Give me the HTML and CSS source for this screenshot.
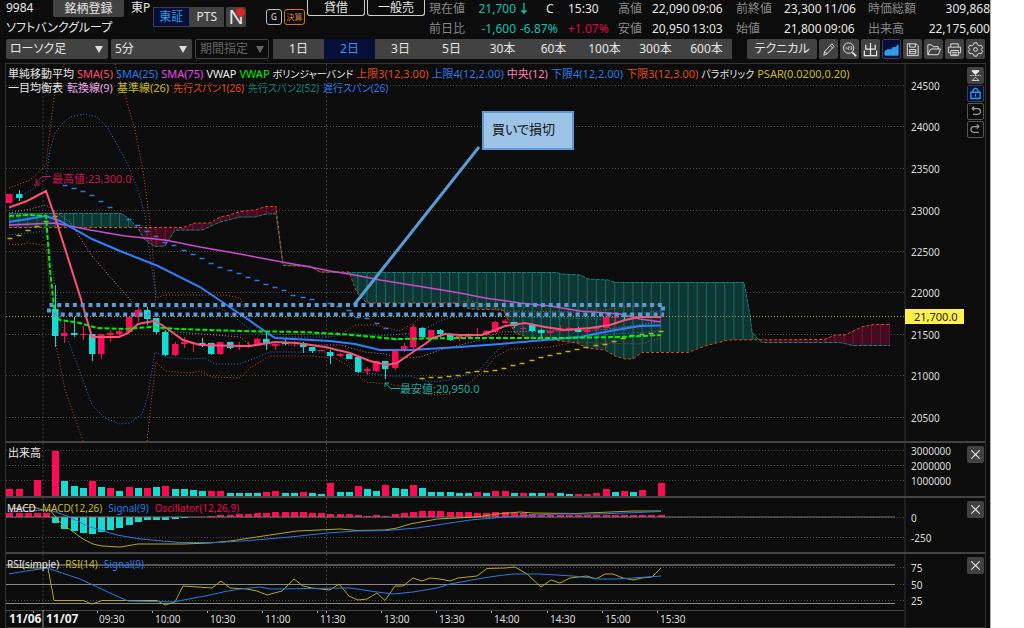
FILE: index.html
```html
<!DOCTYPE html>
<html lang="ja">

<head>
    <meta charset="UTF-8">
    <meta name="viewport" content="width=device-width, initial-scale=1.0">
    <title>9984 ソフトバンクグループ</title>
    <link rel="stylesheet" href="styles.css">
</head>

<body>
    <div class="app">
        <header class="header">
            <div class="symbol">
                <div class="symbol-top">
                    <span class="code">9984</span>
                    <button class="register">銘柄登録</button>
                    <span>東P</span>
                </div>
                <h1 class="symbol-name">ソフトバンクグループ</h1>
            </div>
            <div class="market-tabs">
                <button class="active">東証</button><button>PTS</button>
            </div>
            <button class="news">N<i class="news-dot"></i></button>
            <div class="badges">
                <span class="badge">G</span>
                <span class="badge badge-orange">決算</span>
            </div>
            <div class="margin-types">
                <button>貸借</button>
                <button>一般売</button>
            </div>
            <div class="quotes">
                <span class="label">現在値</span>
                <span class="down right">21,700</span>
                <span class="status"><b class="down">↓</b><span>C</span></span>
                <span>15:30</span>
                <span class="label">高値</span>
                <span>22,090</span>
                <span>09:06</span>
                <span class="label">前終値</span>
                <span>23,300</span>
                <span>11/06</span>
                <span class="label">時価総額</span>
                <span class="right">309,868</span>

                <span class="label">前日比</span>
                <span class="down right">-1,600</span>
                <span class="down">-6.87%</span>
                <span class="up">+1.07%</span>
                <span class="label">安値</span>
                <span>20,950</span>
                <span>13:03</span>
                <span class="label">始値</span>
                <span>21,800</span>
                <span>09:06</span>
                <span class="label">出来高</span>
                <span class="right">22,175,600</span>
            </div>
        </header>

        <div class="toolbar">
            <div class="select select-type">
                <select aria-label="チャート種類"><option>ローソク足</option></select>
            </div>
            <div class="select select-interval">
                <select aria-label="足種"><option>5分</option></select>
            </div>
            <div class="select select-period disabled">
                <select aria-label="期間" disabled><option>期間指定</option></select>
            </div>
            <div class="ranges">
                <button>1日</button>
                <button class="active">2日</button>
                <button>3日</button>
                <button>5日</button>
                <button>30本</button>
                <button>60本</button>
                <button>100本</button>
                <button>300本</button>
                <button>600本</button>
            </div>
            <div class="tools">
                <button class="technical">テクニカル</button>
                <button class="icon" aria-label="描画">
                    <svg viewBox="0 0 18 18"><path d="M4 15l1-4 7.500-8 2.500 2.500L7.500 13.500zM11 5l2.500 2.500M5 11l2.500 2.500" /></svg>
                </button>
                <button class="icon" aria-label="数値表示">
                    <svg viewBox="0 0 18 18"><circle cx="8" cy="7.500" r="5.500" /><path d="M12 12l4 4" stroke-width="2" /><path d="M5.500 6v3M7.300 6h1.400v1.500H7.300V9h1.400M10 6h1.300v3H10M10 7.500h1.300" stroke-width=".7" /></svg>
                </button>
                <button class="icon" aria-label="出来高">
                    <svg viewBox="0 0 18 18"><path d="M9 2v13.500M4 4v4.500h10V4M2.500 10v5.500h13V10" stroke-width="1.300" /></svg>
                </button>
                <button class="icon active" aria-label="エリア">
                    <svg viewBox="0 0 18 18"><path class="fill" d="M2 15V11l3-2 3 .5 3-3 2 .5 3-3v11z" /></svg>
                </button>
                <button class="icon" aria-label="保存">
                    <svg viewBox="0 0 18 18"><path d="M3.500 3h9.500l2 2v10.500H3.500zM6 3v3.500h6V3M6 9h6.500v4.500H6zM6 11.200h6.500" /></svg>
                </button>
                <button class="icon" aria-label="開く">
                    <svg viewBox="0 0 18 18"><path d="M3 14.500V4h4l1.500 2H14v2.500M3 14.500l3-6h10.500l-2.500 6z" /></svg>
                </button>
                <button class="icon" aria-label="印刷">
                    <svg viewBox="0 0 18 18"><path d="M5 6V3h8v3M5 12.500H2.500v-6h13v6H13M5 10h8v5.500H5zM6.500 12h5M6.500 14h5" /></svg>
                </button>
                <button class="icon" aria-label="設定">
                    <svg viewBox="0 0 18 18"><circle cx="9" cy="9" r="2" /><path d="M7.500 2h3l.6 2 1.900 1 2.100-.5 1.400 2.600L15 9l1.500 1.900-1.400 2.600-2.100-.5-1.900 1-.6 2h-3l-.6-2-1.900-1-2.100.5-1.400-2.600L3 9 1.500 7.100l1.400-2.600L5 5l1.900-1z" /></svg>
                </button>
            </div>
        </div>

        <main class="chart">
            <section class="pane">
                <svg class="plot" id="price" viewBox="6 64 958 377"></svg>
                <div class="side">
                    <button class="icon" aria-label="上下縮小">
                        <svg viewBox="0 0 18 18"><path class="fill" d="M5 3h8v1L9 8 5 4z" /><path d="M2.500 9h13" stroke-dasharray="2 1" /><path d="M5 15h8l-4-4z" /></svg>
                    </button>
                    <button class="icon active" aria-label="固定">
                        <svg viewBox="0 0 18 18"><path d="M3.500 7.500h11v7.500h-11zM6 7.500V5l2-2h2l2 2v2.500M9 9.500v3.500" stroke-width="1.600" /></svg>
                    </button>
                    <button class="icon outline" aria-label="元に戻す">
                        <svg viewBox="0 0 18 18"><path d="M5 5.500h6.500a3.500 3.500 0 0 1 0 7H6M7.500 3L5 5.500 7.500 8" stroke-width="1.500" /></svg>
                    </button>
                    <button class="icon outline" aria-label="やり直す">
                        <svg viewBox="0 0 18 18"><path d="M13 5.500H7a3.500 3.500 0 0 0 0 7h6M10.500 3L13 5.500 10.500 8" stroke-width="1.500" /></svg>
                    </button>
                </div>
                <div class="legend">
                    <p class="tight">
                        <span>単純移動平均</span>
                        <span class="pink">SMA(5)</span>
                        <span class="blue">SMA(25)</span>
                        <span class="magenta">SMA(75)</span>
                        <span>VWAP</span>
                        <span class="green">VWAP</span>
                        <span class="kana">ボリンジャーバンド</span>
                        <span class="orange">上限3(12,3.00)</span>
                        <span class="blue">上限4(12,2.00)</span>
                        <span class="rose">中央(12)</span>
                        <span class="blue">下限4(12,2.00)</span>
                        <span class="orange">下限3(12,3.00)</span>
                        <span class="kana">パラボリック</span>
                        <span class="yellow">PSAR(0.0200,0.20)</span>
                    </p>
                    <p>
                        <span>一目均衡表</span>
                        <span class="lilac">転換線(9)</span>
                        <span class="yellow">基準線(26)</span>
                        <span class="kana orange">先行スパン1(26)</span>
                        <span class="kana teal">先行スパン2(52)</span>
                        <span class="kana blue">遅行スパン(26)</span>
                    </p>
                </div>
                <div class="callout">買いで損切</div>
            </section>
            <section class="pane">
                <svg class="plot" id="volume" viewBox="6 443 958 53"></svg>
                <div class="side"><button class="icon" aria-label="閉じる"><svg viewBox="0 0 18 18"><path d="M4 4l10 10M14 4L4 14" stroke-width="1.500" /></svg></button></div>
                <div class="legend"><p><span>出来高</span></p></div>
            </section>
            <section class="pane">
                <svg class="plot" id="macd" viewBox="6 498 958 54"></svg>
                <div class="side"><button class="icon" aria-label="閉じる"><svg viewBox="0 0 18 18"><path d="M4 4l10 10M14 4L4 14" stroke-width="1.500" /></svg></button></div>
                <div class="legend small">
                    <p>
                        <span>MACD</span>
                        <span class="yellow">MACD(12,26)</span>
                        <span class="blue">Signal(9)</span>
                        <span class="red">Oscillator(12,26,9)</span>
                    </p>
                </div>
            </section>
            <section class="pane">
                <svg class="plot" id="rsi" viewBox="6 554 958 73"></svg>
                <div class="side"><button class="icon" aria-label="閉じる"><svg viewBox="0 0 18 18"><path d="M4 4l10 10M14 4L4 14" stroke-width="1.500" /></svg></button></div>
                <div class="legend small">
                    <p>
                        <span>RSI(simple)</span>
                        <span class="yellow">RSI(14)</span>
                        <span class="blue">Signal(9)</span>
                    </p>
                </div>
            </section>
        </main>
    </div>

    <script src="chart.js"></script>
</body>

</html>
```

FILE: styles.css
```css
* {
    box-sizing: border-box;
}

body {
    margin: 0;
    background-color: #fff;
    font-family: "Noto Sans", "Noto Sans CJK JP", sans-serif;
    font-size: 12px;
    line-height: 16px;
    color: #e6e6e6;
    font-feature-settings: "palt";
}

button,
select {
    font: inherit;
    font-feature-settings: inherit;
    color: inherit;
    border: none;
    padding: 0;
    margin: 0;
    background-color: #424242;
    border-radius: 2px;
    cursor: pointer;
}

.app {
    margin-right: 33px;
    background-color: #0c0c0c;
    border-right: 1px solid #aaa;
    overflow: hidden;
}

/* Header */

.header {
    display: flex;
    height: 39px;
    padding-left: 6px;
    white-space: nowrap;
}

.symbol {
    width: 147px;
}

.symbol-top {
    display: flex;
    height: 18px;
    gap: 7px;
}

.code {
    width: 40px;
}

.register {
    width: 71px;
    height: 17px;
    border-radius: 0 0 2px 2px;
}

.symbol-name {
    margin: 0;
    font-size: 12px;
    line-height: 20px;
    font-weight: normal;
}

.market-tabs {
    display: flex;
    width: 71px;
    height: 20px;
    margin-top: 7px;
}

.market-tabs button {
    flex: 1;
    border-radius: 0;
}

.market-tabs .active,
.ranges .active,
.icon.active {
    background-color: #050f37;
    color: #2f9bea;
}

.market-tabs .active,
.icon.active {
    border: 1px solid #3a3f50;
}

.news {
    position: relative;
    width: 20px;
    height: 20px;
    margin: 7px 0 0 2px;
    font-size: 20px;
    line-height: 20px;
}

.news-dot {
    position: absolute;
    top: 1px;
    right: 1px;
    width: 9px;
    height: 9px;
    border-radius: 50%;
    background-color: #dc2424;
}

.badges {
    display: flex;
    gap: 2px;
    margin: 9px 2px 0 20px;
}

.badge {
    width: 16px;
    height: 16px;
    border: 1px solid #bbb;
    border-radius: 3px;
    font-size: 8px;
    line-height: 14px;
    text-align: center;
}

.badge-orange {
    width: 21px;
    border-color: #c87820;
    color: #d07c20;
}

.margin-types {
    display: flex;
    gap: 2px;
}

.margin-types button {
    width: 58px;
    height: 16px;
    background-color: transparent;
    border: 1px solid #ccc;
    border-top: none;
    border-radius: 0 0 3px 3px;
}

.quotes {
    flex: 1;
    display: grid;
    grid-template-columns: 48px 39px 52px 50px 34px 40px 44px 48px 40px 44px 50px 1fr;
    grid-template-rows: 18px 22px;
    align-items: center;
    padding-left: 4px;
}

.label {
    color: #888;
}

.right {
    text-align: right;
}

.status {
    display: flex;
    gap: 16px;
    padding-left: 2px;
}

.down {
    color: #12c0b4;
}

.up {
    color: #e0044c;
}

.quotes .down + .down {
    padding-left: 4px;
}

/* Toolbar */

.toolbar {
    display: flex;
    height: 24px;
    padding: 0 5px 4px 6px;
    white-space: nowrap;
}

.select {
    position: relative;
    margin-right: 3px;
}

.select::after {
    content: "";
    position: absolute;
    top: 7px;
    right: 5px;
    border: 4px solid transparent;
    border-top: 7px solid #ddd;
    border-bottom: none;
    pointer-events: none;
}

.select select {
    width: 100%;
    height: 20px;
    padding-left: 4px;
    appearance: none;
}

.select-type {
    width: 102px;
}

.select-interval {
    width: 81px;
}

.select-period {
    width: 74px;
    margin-right: 4px;
}

.disabled select {
    background-color: #0c0c0c;
    border: 1px solid #424242;
    color: #666;
    opacity: 1;
}

.disabled::after {
    border-top-color: #666;
}

.ranges {
    display: flex;
    width: 459px;
    background-color: #424242;
}

.ranges button {
    flex: 1;
    border-radius: 0;
}

.tools {
    display: flex;
    gap: 2px;
    margin-left: auto;
}

.technical {
    width: 70px;
}

.icon {
    width: 19px;
    height: 20px;
}

.icon svg {
    display: block;
    width: 17px;
    height: 17px;
    margin: 0 auto;
    fill: none;
    stroke: currentColor;
}

.icon .fill {
    fill: currentColor;
}

/* Chart */

.chart {
    margin: 0 4px 0 5px;
    border: 1px solid #333;
}

.pane {
    position: relative;
    display: flex;
    border-bottom: 2px solid #444;
}

.pane:last-child {
    border-bottom: none;
}

.plot {
    flex: 1;
    min-width: 0;
    height: auto;
    font-size: 10px;
    fill: #dcdcdc;
}

.plot path,
.plot line {
    fill: none;
}

.plot .cloud-teal {
    fill: #103634;
}

.plot .cloud-red {
    fill: #420c1e;
}

.plot .date {
    font-size: 12px;
    font-weight: bold;
    fill: #eee;
}

.side {
    display: flex;
    flex-direction: column;
    gap: 1px;
    width: 21px;
    padding: 3px 0 0 3px;
}

.side .icon {
    width: 17px;
    height: 17px;
}

.side .icon svg {
    width: 15px;
    height: 15px;
}

.side .outline {
    background-color: #0c0c0c;
    border: 1px solid #555;
    color: #999;
}

.legend {
    position: absolute;
    top: 3px;
    left: 2px;
    font-size: 11px;
    line-height: 14px;
    white-space: nowrap;
}

.legend p {
    display: flex;
    gap: 4px;
    margin: 0;
}

.legend .tight {
    gap: 3px;
}

.legend.small {
    left: 1px;
    font-size: 10px;
}

.legend.small p {
    gap: 6px;
}

.kana {
    font-size: 10px;
}

.pink { color: #ff4a6c; }
.blue { color: #2a78e4; }
.magenta { color: #e84ae8; }
.green { color: #00f000; }
.orange { color: #e04a10; }
.rose { color: #ff80b0; }
.yellow { color: #c8b820; }
.lilac { color: #e8a8e8; }
.teal { color: #108070; }
.red { color: #f0044c; }

.callout {
    position: absolute;
    top: 47px;
    left: 476px;
    width: 92px;
    height: 39px;
    border: 2px solid #5b9bd5;
    background-color: #9dc3e6;
    color: #111;
    font-size: 13px;
    line-height: 33px;
    padding-left: 8px;
}
```

FILE: chart.js
```javascript
const NS = 'http://www.w3.org/2000/svg';
const UP = '#ff0a54';
const DOWN = '#14dcd2';

function add(id, tag, attrs, text) {
    const el = document.createElementNS(NS, tag);
    for (const key in attrs) el.setAttribute(key, attrs[key]);
    if (text) el.textContent = text;
    document.getElementById(id).appendChild(el);
    return el;
}

// x of the n-th 5 minute bar of the day
function barX(n) {
    return 55.3 + n * 9.17;
}

function line(id, points, color, width, dash) {
    const attrs = { d: 'M' + points, stroke: color, 'stroke-width': width || 1 };
    if (dash) attrs['stroke-dasharray'] = dash;
    add(id, 'path', attrs);
}

function label(id, x, y, text, attrs) {
    add(id, 'text', Object.assign({ x: x, y: y }, attrs), text);
}

function grid(id, top, bottom, rows) {
    [43, 326.5].forEach(x => line(id, `${x} ${top}V${bottom}`, '#383838', 1, '2 2'));
    rows.forEach(([y, text]) => {
        line(id, `6 ${y}H904`, '#484848', 1, '1 2');
        if (text) label(id, 911, y + 4, text);
    });
    line(id, `905 ${top}V627`, '#333', 1);
}

function cloud(points, name, from, to) {
    add('price', 'path', { d: 'M' + points + 'z', class: name });
    const clip = add('price', 'clipPath', { id: name + from });
    const shape = document.createElementNS(NS, 'path');
    shape.setAttribute('d', 'M' + points + 'z');
    clip.appendChild(shape);
    let d = '';
    for (let n = from; n <= to; n++) d += `M${barX(n)} 200V365`;
    add('price', 'path', { d: d, stroke: name === 'cloud-teal' ? '#107068' : '#801038', 'clip-path': `url(#${name + from})` });
}

function dashes(points, color) {
    points.forEach(([x, y]) => line('price', `${x - 2.5} ${y}h5`, color, 1.5));
}

/* Price */

grid('price', 64, 441, [
    [85.5, '24500'], [126.5, '24000'], [168.5, '23500'], [210.5, '23000'], [251.5, '22500'],
    [292.5, '22000'], [334.5, '21500'], [375.5, '21000'], [417.5, '20500']
]);

cloud('9 213L121 213L128 218L138 227.5L9 227.5', 'cloud-teal', -5, 9);
cloud('138 227.5L183 227.5L195 223L210 223L220 217L230 215L240 211.500L255 210L266 206L276 206L276 214L266 214L255 217L240 217L220 222L202 230L175 230L165 246L155 246.5L145 240', 'cloud-red', 9, 24);
cloud('349 272L556 272L562 274L580 275L588 279L608 280L615 282L744 282L750 315L752 332L757 338L761 340L728 340L705 346L688 352L642 352L633 359L625 359L615 356L605 350L587 348L577 343L553 340L530 338L515 333L510 323L503 310L470 309L453 303L367 303L357 293', 'cloud-teal', 32, 77);
cloud('761 339.5L824 339.5L835 335L845 335L862 327L874 324L890 324L890 345.5L853 345.5L840 342L762 342', 'cloud-red', 77, 91);

const spanA = '#d84a10';
const spanB = '#128078';
line('price', '9 213.5L121 213.5L128 218L138 228L145 240L155 246.5L165 246L175 230L202 230L220 222L240 217L255 217L266 214L276 214L283 265L310 266L320 272L349 272.5L556 272.5L562 274L580 275L588 279L608 280L615 282.5L744 282.5L750 315L752 332L757 338L762 342.5L840 342.5L853 345.5L890 345.5', spanB, 1, '4 1');
line('price', '9 227.5L183 227.5L195 223L210 223L220 217L230 215L240 211.5L255 210L266 206.5L276 206.5L283 265.5L310 266.5L320 272L349 272L357 293L367 303L453 303L470 309L503 310L510 323L515 333L530 338L553 340L577 343L587 348L605 350L615 356L625 359L633 359L642 352.5L688 352.5L705 346L728 340L824 339.5L835 335L845 335L862 327L874 324.5L890 324.5', spanA, 1, '3 2');

// bollinger bands
line('price', '9 188L30 180L46 165L50 130L54 98L57 80L64 64M115 64L125 95L135 130L143 170L149 215L153 255L156 298L165 295L190 295L225 295L240 298L250 320L262 334L340 335L355 325L375 325L400 331L415 322L430 310L450 303L470 301L490 306L503 311L580 312L640 306L661 304', '#cc4a18', 1, '1 2');
line('price', '9 244L20 245L27 243L46 245L50 290L57 350L65 390L75 418L83 441M147 441L152 395L156 362L165 371L190 373L200 371L212 377L240 378L250 368L270 356L310 356L335 358L350 367L365 382L390 384L410 388L430 395L450 394L468 384L485 370L495 357L510 349L550 347L575 342L600 343L640 344L661 338', '#cc4a18', 1, '1 2');
line('price', '9 202L30 191L46 179L50 150L55 133L62 124L70 117L85 114L97 117L107 127L117 144L128 165L138 190L145 215L150 255L155 290L156 308L190 308L220 308L232 315L253 332L275 337L330 337L353 333L370 336L393 335L420 332L440 321L453 317L480 316L600 319L640 313L661 311', '#2a70d8', 1, '1 2');
line('price', '9 235L46 231L51 260L60 320L70 345L80 372L92 405L105 418L120 424L130 423L142 414L148 395L155 352L165 357L190 359L205 358L215 364L240 364L250 360L270 352L325 352L340 355L360 372L390 376L410 376L430 382L450 380L480 370L490 358L500 348L510 343L550 339L600 335L661 331', '#2a70d8', 1, '1 2');
line('price', '9 213L30 209L46 205L60 215L70 222L92 256L132 302L165 331L215 335L240 337L250 345L340 345L365 352L385 354L400 358L420 357L440 350L480 340L500 332L540 331L600 330L640 325L661 321', '#c88090', 1, '1 2');

dashes([[65, 185], [74, 188], [83, 191], [92, 195], [101, 201], [110, 207], [129, 219], [138, 225], [147, 231], [156, 236], [165, 242], [174, 245], [184, 250], [193, 254], [202, 258], [211, 263], [220, 267], [230, 270], [239, 273], [248, 277], [257, 280], [266, 284], [275, 287], [284, 290], [293, 295], [303, 297], [312, 299], [330, 303], [339, 306], [349, 310], [358, 317], [367, 318], [377, 323], [386, 328], [395, 339]].map(([x, y]) => [x, y + 0.5]), '#2a78e4');
dashes([[10, 238], [19, 235], [28, 230], [37, 226], [46, 221], [55, 216], [422, 378], [431, 377], [440, 377], [449, 376], [458, 375], [468, 372], [477, 371], [486, 371], [495, 370], [504, 368], [513, 365], [522, 363], [532, 360], [541, 357], [550, 355], [559, 353], [568, 351], [577, 349], [586, 347], [596, 345], [605, 344], [614, 341], [623, 338], [632, 335], [642, 334], [651, 333], [661, 331]].map(([x, y]) => [x, y + 0.5]), '#c0a820');

// bar, rising, body top, body bottom, wick top, wick bottom
const candles = [
    [-5, 1, 194, 203, 194, 203], [-4, 0, 194, 198, 190, 201],
    [0, 0, 309, 336, 285, 347], [1, 1, 333, 336, 322, 343], [2, 0, 333, 335, 317, 337],
    [3, 1, 334, 335, 326, 340], [4, 0, 334, 354, 334, 361], [5, 1, 334, 354, 334, 359],
    [6, 1, 333, 335, 330, 342], [7, 1, 331, 334, 330, 337], [8, 1, 317, 332, 317, 332],
    [9, 1, 310, 317, 307, 322], [10, 0, 310, 319, 307, 325], [11, 0, 318, 332, 318, 334],
    [12, 0, 332, 355, 330, 356], [13, 1, 344, 355, 342, 356], [14, 1, 342, 344, 337, 348],
    [15, 1, 343, 343.5, 342, 352], [16, 0, 343, 345, 338, 347], [17, 0, 343, 354, 343, 355],
    [18, 1, 342, 354, 342, 355], [19, 0, 342, 348, 342, 349], [20, 1, 346, 347, 342, 350],
    [21, 1, 345, 347, 342, 348], [22, 1, 339, 345, 338, 346], [23, 0, 339, 344, 332, 350],
    [24, 1, 344, 346, 344, 350], [25, 0, 343, 344, 339, 345], [26, 1, 342, 343, 341, 347],
    [27, 0, 343, 347, 342, 353], [28, 0, 347, 351, 347, 353], [29, 1, 350, 351, 350, 351],
    [30, 0, 352, 356, 350, 364], [31, 1, 354, 356, 353, 357], [32, 0, 354, 359, 354, 359],
    [33, 0, 357, 372, 357, 373], [34, 1, 369, 371, 367, 375], [35, 1, 361, 371, 361, 372],
    [36, 0, 361, 369, 361, 379], [37, 1, 351, 368, 349, 370], [38, 1, 346, 350, 343, 352],
    [39, 1, 327, 347, 324, 350], [40, 0, 328, 337, 327, 339], [41, 1, 330, 339, 330, 340],
    [42, 0, 330, 334, 329, 337], [43, 0, 334, 340, 333, 341], [44, 1, 336, 339, 335, 341],
    [45, 1, 334, 337, 333, 338], [46, 1, 334, 336, 328, 338], [47, 1, 331, 335, 330, 336],
    [48, 1, 322, 332, 321, 333], [49, 1, 321, 323, 319, 324], [50, 0, 322, 326, 322, 328],
    [51, 1, 328, 329, 327, 330], [52, 0, 325, 331, 323, 332], [53, 0, 330, 333, 329, 338],
    [54, 1, 331, 333, 330, 334], [55, 1, 329, 331, 325, 332], [56, 1, 328, 329, 327, 330],
    [57, 0, 328, 332, 327, 332], [58, 1, 330, 332, 329, 333], [59, 1, 328, 329, 327, 330],
    [60, 1, 317, 328, 317, 328], [61, 1, 317, 318, 317, 325], [62, 0, 316, 317, 315, 319],
    [63, 1, 316, 317, 315, 318], [64, 1, 316, 317, 315, 318], [66, 1, 316, 317, 315, 318]
];
candles.forEach(([n, up, top, bottom, high, low]) => {
    const x = Math.round(barX(n));
    const fill = up ? UP : DOWN;
    add('price', 'rect', { x: x - 3, y: top, width: 6.5, height: bottom - top, fill: fill });
    add('price', 'rect', { x: x, y: high, width: 1, height: low - high, fill: fill });
});

line('price', '9 225L55 223L90 230L125 236L165 240L200 247L240 254L282 262L310 267L330 271L355 275L380 280L430 288L460 293L485 298L520 303L550 306L580 311L620 314L640 319L661 322', '#cc4cd0', 1.4);
line('price', '9 222L46 216L60 221L92 239L120 251L158 266L200 287L240 314L275 338L330 341L355 344L380 350L410 350L460 347L500 344L545 340L580 337L610 331L640 326L661 325.500', '#2f80ff', 2);
line('price', '9 207.500L27 201L46 191L55 217L80 296L92 337L119 337L128 333L138 324L148 322L155 321L165 327L183 340L200 345L240 346L250 346L275 342L297 343L325 347L350 353L370 361L387 365L397 363L410 354L425 344L433 338L445 334L460 335L482 335L495 330L505 326L525 323L545 327L565 330L590 328L610 325L625 320L640 317L661 317', '#ff5078', 2);
line('price', '9 216L30 215L46 216L50 270L55 315L60 320L80 323L97 328L125 329L150 327L180 329L240 331L300 332L340 334L375 337L395 339L460 338L560 338L620 337L661 335', '#00f000', 2, '5 2');
line('price', '6 316.500H904', '#a8a030', 1, '1 2');

// trade marks
line('price', '49.500 305H664', '#5b9bd5', 4, '4 3.800');
line('price', '53 314.500H664', '#5b9bd5', 4, '4 3.800');
line('price', '47 310.500h4M661 308.500h4', '#5b9bd5', 4);
line('price', '479 147L354 305', '#5b9bd5', 3);

line('price', '51 176.500H42L36 183M36 179v4h4M34 185h6', '#d0104f', 1);
label('price', 52, 183, '最高値:23,300.0', { fill: '#d0104f', 'font-size': 11 });
line('price', '400 388.500H391L385 383M385 387v-4h4', '#18aaa0', 1);
label('price', 400, 393, '最安値:20,950.0', { fill: '#18aaa0', 'font-size': 11 });

add('price', 'rect', { x: 905, y: 309, width: 60, height: 15, fill: '#fff04c' });
label('price', 914, 321, '21,700.0', { fill: '#222', 'font-size': 11 });

/* Volume */

grid('volume', 443, 496, [[450.5, '3000000'], [465.5, '2000000'], [480.5, '1000000']]);

const volumes = [
    7, 7, 0, 16, 0, 45, 15, 10, 8, 15, 9, 8, 5, 9, 8, 8, 9, 10, 7, 7, 6, 5, 5, 5, 3, 3, 3, 3, 4, 5, 3, 3, 4, 3, 2,
    13, 4, 4, 10, 7, 5, 11, 8, 7, 11, 8, 4, 4, 4, 3, 3, 4, 3, 5, 5, 3, 3, 3, 3, 3, 3, 2, 2, 2, 3, 7, 4, 5, 4, 6, 0, 13
];
const rising = [-5, -4, -2, 0, 4, 6, 8, 10, 12, 17, 18, 23, 24, 27, 30, 33, 36, 39, 46, 48, 49, 51, 54, 57, 58, 59, 60, 62, 64, 66];
volumes.forEach((h, i) => {
    add('volume', 'rect', { x: Math.round(barX(i - 5)) - 3, y: 496 - h, width: 7, height: h, fill: rising.includes(i - 5) ? UP : DOWN });
});

/* MACD */

grid('macd', 498, 552, [[517.5, '0'], [537.5, '-250']]);

const oscillator = [
    4, 4, 4, 4, 4, -6, -12, -14, -16, -17, -15, -13, -11, -8, -5, -3, -3, -3, -2, -1, 0, 0, 1, 2, 2, 3, 3, 4, 4, 5, 5, 5, 5, 4, 4,
    3, 3, 3, 2, 1, 2, 1, 3, 4, 5, 6, 6, 6, 5, 5, 5, 4, 4, 5, 5, 4, 4, 3, 2, 2, 2, 2, 2, 2, 2, 2, 2, 2, 2, 2, 2, 2
];
oscillator.forEach((h, i) => {
    add('macd', 'rect', { x: Math.round(barX(i - 5)) - 3, y: h > 0 ? 517 - h : 517, width: 7, height: Math.abs(h), fill: h > 0 ? UP : DOWN });
});
line('macd', '6 517H895', '#777', 1);
line('macd', '9 509L33 507L43 510L50 510L60 522L72 531L83 539L93 544L102 546L120 547L138 544L183 544L210 543L230 541L250 538L270 535L297 531L340 529L357 530.500L385 530L397 528L410 524L437 519L477 517L497 514L520 512L533 513L577 513.500L610 512L633 511L661 511', '#b8a420');
line('macd', '9 512L50 510L67 516L90 527L117 535L140 539L180 542.500L217 542.500L250 540.500L290 537L327 533L357 531L387 530.500L417 528L437 525L470 520L500 517.500L533 515L560 514L600 514L661 511.500', '#2a78e4');

/* RSI */

grid('rsi', 554, 610, [[567.5, '75'], [584.5, '50'], [600.5, '25']]);
line('rsi', '6 565H895', '#555', 2);
line('rsi', '6 584.500H895M6 603.500H895', '#888', 1);
line('rsi', '9 567L33 568L48 568L54 600.500L83 600.500L92 604L102 600.500L157 600.500L165 605L175 602L183 586L212 588L221 581L230 588L247 589L257 591L267 595L282 591L294 579L303 586L312 588L330 590L339 584L349 596L358 600L367 599L377 593L385 600.500L395 586L403 586L413 578L422 581L430 578L440 579L450 581L458 578L477 576L487 568.500L505 568L515 567L527 574L541 587L551 580L560 583L570 578L587 576L596 579L605 574L613 574L623 578L633 580L642 578L652 577L661 568', '#b8a420');
line('rsi', '9 574L20 572L47 568L80 579L110 593L128 601L173 602L210 595L223 592L240 589L260 587L270 589L350 588L377 592L393 594L413 592L437 588L450 584L483 578L500 575.500L513 574L540 574L573 576L600 579L615 579L633 578L661 576', '#2a78e4');

line('rsi', '6 610.500H904', '#444');
line('rsi', '43 610V627', '#999');
[[33], [97, '09:30', 99], [152, '10:00', 155], [207, '10:30', 210], [262, '11:00', 265], [317, '11:30', 320], [326], [381, '13:00', 384], [436, '13:30', 439], [491, '14:00', 494], [547, '14:30', 550], [602, '15:00', 605], [657, '15:30', 660]].forEach(([tick, text, x]) => {
    line('rsi', `${tick + 0.5} 611v2`, '#aaa');
    if (text) label('rsi', x, 623, text);
});
label('rsi', 9, 623, '11/06', { class: 'date' });
label('rsi', 46, 623, '11/07', { class: 'date' });
```
